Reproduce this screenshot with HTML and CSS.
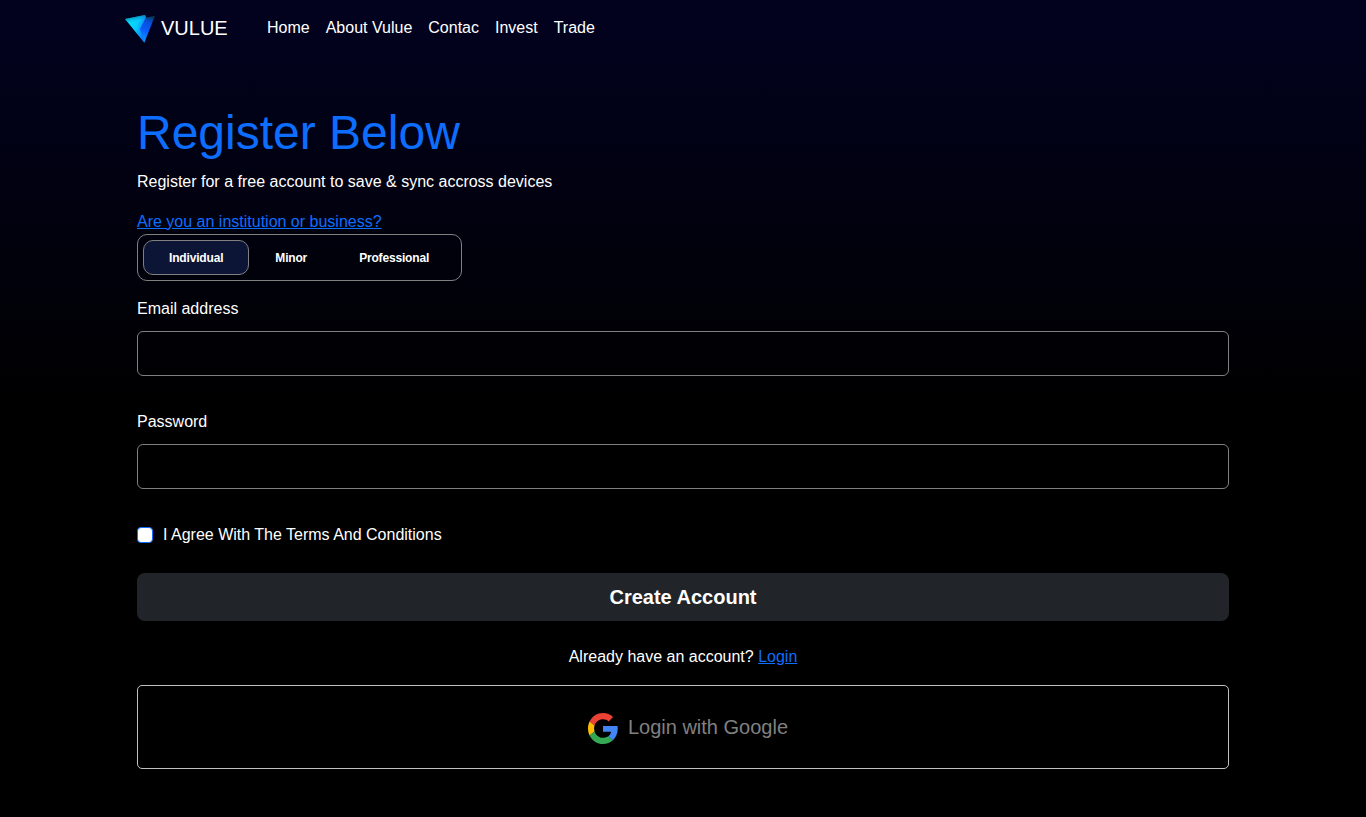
FILE: index.html
```html
<!DOCTYPE html>
<html lang="en">
<head>
<meta charset="utf-8">
<title>Vulue</title>
<link rel="stylesheet" href="styles.css">
</head>
<body>
<header class="navbar">
  <a class="brand" href="#">
    <svg class="brand-logo" width="32" height="30" viewBox="0 0 32 30">
      <defs>
        <linearGradient id="left" gradientUnits="userSpaceOnUse" x1="5" y1="8" x2="23" y2="14"><stop offset="0" stop-color="#04dcf8"/><stop offset=".45" stop-color="#08ccfc"/><stop offset="1" stop-color="#0a6cf8"/></linearGradient>
        <linearGradient id="right" gradientUnits="userSpaceOnUse" x1="29" y1="1" x2="20" y2="28"><stop offset="0" stop-color="#06302c"/><stop offset=".28" stop-color="#0650d8"/><stop offset=".6" stop-color="#0a5cfc"/><stop offset="1" stop-color="#0a9cf8"/></linearGradient>
        <linearGradient id="shade" gradientUnits="userSpaceOnUse" x1="13" y1="2" x2="14" y2="7"><stop offset="0" stop-color="#066a90" stop-opacity=".6"/><stop offset="1" stop-color="#087cc8" stop-opacity="0"/></linearGradient>
      </defs>
      <path d="M20 4 31 1.7 20.3 28.7 13 18Z" fill="url(#right)"/>
      <path d="M1 5 21 1 22 3 16 15 20.3 28.7Z" fill="url(#left)"/>
      <path d="M1 5 21 1 22 3 16 15 20.3 28.7Z" fill="url(#shade)"/>
    </svg>
    <span>VULUE</span>
  </a>
  <nav class="nav-links">
    <a href="#">Home</a><a href="#">About Vulue</a><a href="#">Contac</a><a href="#">Invest</a><a href="#">Trade</a>
  </nav>
</header>
<main class="register">
  <h1 class="title">Register Below</h1>
  <p class="lead">Register for a free account to save &amp; sync accross devices</p>
  <a class="link institution" href="#">Are you an institution or business?</a>
  <div class="tabs">
    <button class="tab tab-active">Individual</button><button class="tab">Minor</button><button class="tab">Professional</button>
  </div>
  <form class="form">
    <label class="label" for="email">Email address</label>
    <input class="input" id="email" type="email">
    <label class="label" for="password">Password</label>
    <input class="input" id="password" type="password">
    <label class="agree"><input class="checkbox" type="checkbox"><span>I Agree With The Terms And Conditions</span></label>
    <button class="submit" type="button">Create Account</button>
  </form>
  <p class="login">Already have an account? <a class="link" href="#">Login</a></p>
  <button class="google">
    <svg class="google-logo" width="30" height="31" viewBox="0 0 48 48" preserveAspectRatio="none">
      <path fill="#EA4335" d="M24 9.5c3.54 0 6.71 1.22 9.21 3.6l6.85-6.85C35.9 2.38 30.47 0 24 0 14.62 0 6.51 5.38 2.56 13.22l7.98 6.19C12.43 13.72 17.74 9.5 24 9.5z"/>
      <path fill="#4285F4" d="M47.6 24.55c0-1.57-.15-3.09-.38-4.55H24v9.02h12.94c-.58 2.96-2.26 5.48-4.78 7.18l7.73 6c4.51-4.18 7.71-10.36 7.71-17.65z"/>
      <path fill="#FBBC05" d="M10.53 28.59c-.48-1.45-.76-2.99-.76-4.59s.27-3.14.76-4.59l-7.98-6.19C.92 16.46 0 20.12 0 24c0 3.88.92 7.54 2.56 10.78l7.97-6.19z"/>
      <path fill="#34A853" d="M24 48c6.48 0 11.93-2.13 15.89-5.81l-7.73-6c-2.15 1.45-4.92 2.3-8.16 2.3-6.26 0-11.57-4.22-13.47-9.91l-7.98 6.19C6.51 42.62 14.62 48 24 48z"/>
    </svg>
    <span>Login with Google</span>
  </button>
</main>
</body>
</html>
```
FILE: styles.css
```css
* { box-sizing: border-box; }
body {
  margin: 0;
  height: 817px;
  overflow: hidden;
  background: linear-gradient(#020220, #000 50%) #000;
  color: #fff;
  font: 16px/24px "Liberation Sans", Arial, sans-serif;
}
button { font-family: inherit; color: inherit; }
a { color: inherit; text-decoration: none; }
.navbar {
  display: flex;
  align-items: center;
  height: 56px;
  padding-left: 124px;
}
.brand {
  display: flex;
  align-items: center;
  width: 143px;
  font-size: 20px;
  gap: 5px;
}
.brand-logo { display: block; margin-top: 2px; }
.nav-links { display: flex; gap: 16px; }
.register {
  display: flex;
  flex-direction: column;
  width: 1092px;
  margin: 0 auto;
  padding-top: 48px;
}
.title {
  margin: 0 0 9px;
  font-size: 48px;
  line-height: 57px;
  font-weight: 400;
  color: #0d6efd;
}
.lead { margin: 0 0 16px; }
.link { color: #0d6efd; text-decoration: underline; }
.institution { align-self: flex-start; }
.tabs {
  display: flex;
  width: 325px;
  height: 47px;
  margin: 0 0 16px;
  padding: 5px;
  border: 1px solid #808080;
  border-radius: 10px;
}
.tab {
  height: 35px;
  padding: 0 25px;
  border: 1px solid transparent;
  border-radius: 10px;
  background: transparent;
  font-size: 12px;
  font-weight: 600;
  letter-spacing: -0.17px;
}
.tab-active { border-color: #808080; background: #0d1536; }
.form { display: flex; flex-direction: column; }
.label { margin-bottom: 10px; }
.input {
  height: 45px;
  margin: 0 0 34px;
  padding: 0 12px;
  border: 1px solid #808080;
  border-radius: 6px;
  background: transparent;
  color: #fff;
}
.agree {
  display: flex;
  align-items: center;
  gap: 10px;
  margin-bottom: 26px;
}
.checkbox {
  appearance: none;
  width: 16px;
  height: 16px;
  margin: 0;
  border: 1px solid #0d6efd;
  border-radius: 4px;
  background: #fff;
}
.submit {
  height: 48px;
  border: 0;
  border-radius: 8px;
  background: #212529;
  font-size: 20px;
  font-weight: 700;
}
.login { margin: 24px 0 16px; text-align: center; }
.google {
  display: flex;
  justify-content: center;
  align-items: center;
  gap: 10px;
  height: 84px;
  padding: 0 0 0 10px;
  border: 1px solid #c0c0c0;
  border-radius: 5px;
  background: transparent;
  font-size: 20px;
  color: #808080;
}
.google-logo { margin-top: 3px; }
```
